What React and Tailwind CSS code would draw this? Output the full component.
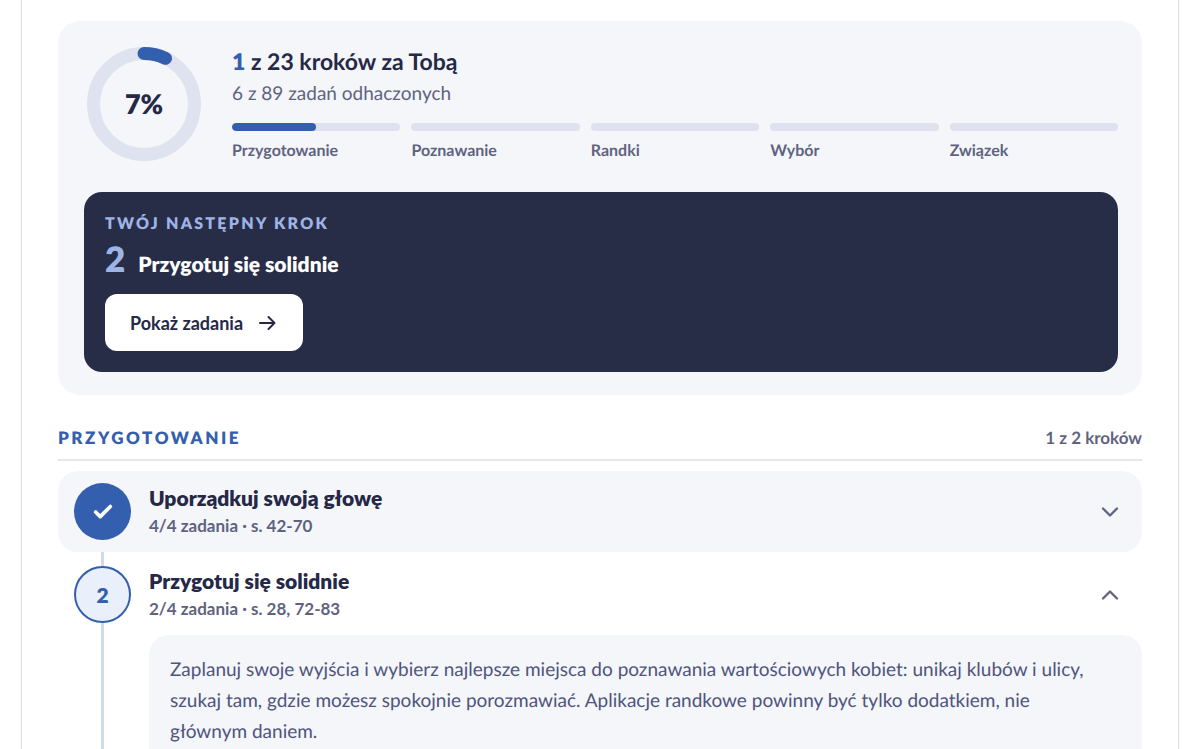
import React, { useState } from 'react';
import { Check, ChevronDown, ChevronUp } from 'lucide-react';

const stages = [
  { name: 'Przygotowanie', done: 1, total: 2 },
  { name: 'Poznawanie', done: 0, total: 5 },
  { name: 'Randki', done: 0, total: 6 },
  { name: 'Wybór', done: 0, total: 5 },
  { name: 'Związek', done: 0, total: 5 },
];

const steps = [
  {
    id: 1,
    title: 'Uporządkuj swoją głowę',
    meta: '4/4 zadania · s. 42-70',
    done: true,
    description: '',
  },
  {
    id: 2,
    title: 'Przygotuj się solidnie',
    meta: '2/4 zadania · s. 28, 72-83',
    done: false,
    description:
      'Zaplanuj swoje wyjścia i wybierz najlepsze miejsca do poznawania wartościowych kobiet: unikaj klubów i ulicy, szukaj tam, gdzie możesz spokojnie porozmawiać. Aplikacje randkowe powinny być tylko dodatkiem, nie głównym daniem.',
  },
];

const ProgressRing = ({ percent }) => {
  const radius = 50.5;
  const length = 2 * Math.PI * radius;

  return (
    <div className="grid h-30 w-30 shrink-0 place-items-center">
      <svg viewBox="0 0 120 120" className="col-start-1 row-start-1 h-30 w-30 -rotate-90" aria-hidden="true">
        <circle cx="60" cy="60" r={radius} fill="none" stroke="#dfe3ef" strokeWidth="13" />
        <circle
          cx="60"
          cy="60"
          r={radius}
          fill="none"
          stroke="#345eae"
          strokeWidth="13"
          strokeLinecap="round"
          strokeDasharray={`${(length * percent) / 100} ${length}`}
        />
      </svg>
      <span className="col-start-1 row-start-1 text-[27px] leading-8 font-extrabold text-[#252846]">{percent}%</span>
    </div>
  );
};

const StageBar = ({ stage }) => (
  <li className="min-w-0 flex-1">
    <div className="h-2 overflow-hidden rounded-full bg-[#dfe1ee]">
      <div
        className="h-full rounded-full bg-[#345eae]"
        style={{ width: `${(stage.done / stage.total) * 100}%` }}
      />
    </div>
    <p className="mt-2 text-[16px] leading-6 font-bold text-[#5f6380]">{stage.name}</p>
  </li>
);

const ArrowIcon = () => (
  <svg
    viewBox="0 0 22 22"
    className="h-[22px] w-[22px]"
    fill="none"
    stroke="currentColor"
    strokeWidth="2"
    strokeLinecap="round"
    strokeLinejoin="round"
    aria-hidden="true"
  >
    <path d="M4 11h14.5M12.5 5l6 6-6 6" />
  </svg>
);

const Step = ({ step, open, first, last, onToggle }) => {
  const Chevron = open ? ChevronUp : ChevronDown;

  return (
    <li>
      {!first && <div className="ml-[43px] h-[2px] w-[3px] bg-[#d0dbee]" />}
      <button
        type="button"
        onClick={onToggle}
        aria-expanded={open}
        className={`flex w-full items-stretch rounded-[20px] pr-[18px] pl-4 text-left ${step.done ? 'bg-[#f4f6fa]' : ''}`}
      >
        <span className="flex w-[57px] flex-col items-center">
          <span className={`h-3 w-[3px] ${first ? '' : 'bg-[#d0dbee]'}`} />
          {step.done ? (
            <span className="grid h-[57px] w-[57px] place-items-center rounded-full bg-[#345eae] text-white">
              <Check size={22} strokeWidth={4} />
            </span>
          ) : (
            <span className="grid h-[57px] w-[57px] place-items-center rounded-full border-2 border-[#345eae] bg-[#e9effb] text-[21px] leading-6 font-extrabold text-[#345eae]">
              {step.id}
            </span>
          )}
          <span className={`w-[3px] flex-1 ${last ? 'bg-[#d0dbee]' : ''}`} />
        </span>
        <span className="ml-[18px] flex-1 pt-[11px] pb-[14px]">
          <span className="block text-[21px] leading-8 font-extrabold text-[#252846]">{step.title}</span>
          <span className="block text-[17px] leading-6 font-bold text-[#5f6380]">{step.meta}</span>
        </span>
        <Chevron size={28} strokeWidth={2} className="self-center text-[#5f6380]" />
      </button>

      {open && step.description && (
        <div className="flex pl-4">
          <div className="flex w-[57px] shrink-0 justify-center">
            <span className="w-[3px] bg-[#d0dbee]" />
          </div>
          <div className="ml-[18px] flex-1 rounded-[20px] bg-[#f4f6fa] pt-[19px] pr-8 pb-8 pl-[21px]">
            <p className="text-[19px] leading-[31px] text-[#4f547c]">{step.description}</p>
          </div>
        </div>
      )}
    </li>
  );
};

export default function App() {
  const [openStep, setOpenStep] = useState(2);

  return (
    <div className="min-h-screen bg-white px-[21px] font-[Lato,sans-serif] antialiased [text-rendering:geometricPrecision]">
      <main className="min-h-screen border-x border-[#dcdde2] px-9 pt-[21px]">
        {/* Overall progress */}
        <section className="rounded-[22px] bg-[#f4f6fa] pt-[23px] pr-6 pb-[23px] pl-[26px]">
          <div className="flex items-start gap-7">
            <ProgressRing percent={7} />
            <div className="min-w-0 flex-1">
              <h1 className="text-[23px] leading-[34px] font-bold text-[#252846]">
                <span className="font-extrabold text-[#345eae]">1</span> z 23 kroków za Tobą
              </h1>
              <p className="text-[19px] leading-8 text-[#5f6380]">6 z 89 zadań odhaczonych</p>
              <ul className="mt-[13px] flex gap-[11px]">
                {stages.map((stage) => (
                  <StageBar key={stage.name} stage={stage} />
                ))}
              </ul>
            </div>
          </div>

          <div className="mt-7 rounded-[18px] bg-[#272d47] p-[21px]">
            <p className="text-[16px] leading-[22px] font-extrabold tracking-[0.14em] text-[#9fb4e6] uppercase">
              Twój następny krok
            </p>
            <p className="flex items-baseline gap-[13px]">
              <span className="text-[35px] leading-[48px] font-extrabold text-[#9fb4e6]">2</span>
              <span className="text-[21px] leading-8 font-extrabold text-white">Przygotuj się solidnie</span>
            </p>
            <button
              type="button"
              onClick={() => setOpenStep(2)}
              className="mt-[11px] flex h-[57px] items-center gap-[13px] rounded-[12px] bg-white px-[25px] text-[18px] leading-6 font-bold text-[#252846]"
            >
              Pokaż zadania
              <ArrowIcon />
            </button>
          </div>
        </section>

        {/* Steps of the current stage */}
        <section className="mt-[29px]">
          <header className="flex items-center justify-between border-b-2 border-[#e6e8ee] pb-[7px]">
            <h2 className="text-[17px] leading-7 font-extrabold tracking-[0.15em] text-[#345eae] uppercase">
              Przygotowanie
            </h2>
            <span className="text-[17px] leading-7 font-bold text-[#5f6380]">1 z 2 kroków</span>
          </header>
          <ol className="mt-[10px]">
            {steps.map((step, index) => (
              <Step
                key={step.id}
                step={step}
                open={openStep === step.id}
                first={index === 0}
                last={index === steps.length - 1}
                onToggle={() => setOpenStep(openStep === step.id ? null : step.id)}
              />
            ))}
          </ol>
        </section>
      </main>
    </div>
  );
}
